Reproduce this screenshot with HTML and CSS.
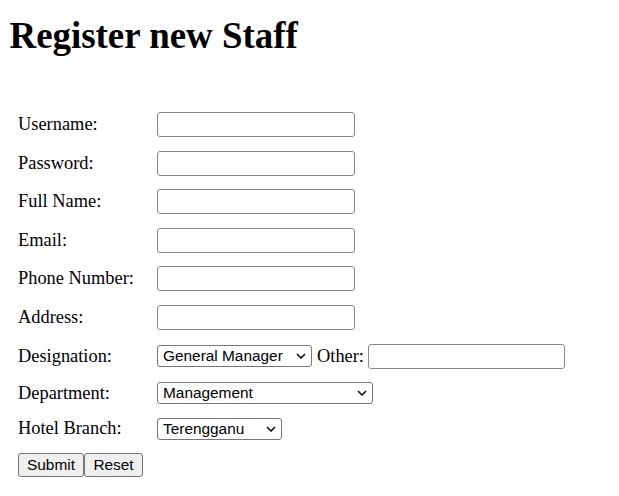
FILE: index.html
```html
<!DOCTYPE html>
<html lang="en">
<head>
<meta charset="utf-8">
<title>Register new Staff</title>
<link rel="stylesheet" href="styles.css">
</head>
<body>
<h1 class="title">Register new Staff</h1>
<form class="form">
  <label class="label">Username:</label>
  <div class="control"><input class="field" type="text"></div>

  <label class="label">Password:</label>
  <div class="control"><input class="field" type="password"></div>

  <label class="label">Full Name:</label>
  <div class="control"><input class="field" type="text"></div>

  <label class="label">Email:</label>
  <div class="control"><input class="field" type="text"></div>

  <label class="label">Phone Number:</label>
  <div class="control"><input class="field" type="text"></div>

  <label class="label">Address:</label>
  <div class="control"><input class="field" type="text"></div>

  <label class="label">Designation:</label>
  <div class="control">
    <span class="select-wrap sel-desig">
      <select class="select"><option>General Manager</option></select>
      <svg class="chev" viewBox="0 0 10 6" width="10" height="6"><path d="M1 1 L5 5 L9 1" fill="none" stroke="#111" stroke-width="1.6"/></svg>
    </span>
    <span class="other">Other:</span>
    <input class="field field-other" type="text">
  </div>

  <label class="label">Department:</label>
  <div class="control control-short">
    <span class="select-wrap sel-dept">
      <select class="select"><option>Management</option></select>
      <svg class="chev" viewBox="0 0 10 6" width="10" height="6"><path d="M1 1 L5 5 L9 1" fill="none" stroke="#111" stroke-width="1.6"/></svg>
    </span>
  </div>

  <label class="label">Hotel Branch:</label>
  <div class="control control-short">
    <span class="select-wrap sel-branch">
      <select class="select"><option>Terengganu</option></select>
      <svg class="chev" viewBox="0 0 10 6" width="10" height="6"><path d="M1 1 L5 5 L9 1" fill="none" stroke="#111" stroke-width="1.6"/></svg>
    </span>
  </div>

  <div class="actions">
    <button class="btn btn-submit" type="submit">Submit</button><button class="btn btn-reset" type="reset">Reset</button>
  </div>
</form>
</body>
</html>
```
FILE: styles.css
```css
html, body {
  margin: 0;
  padding: 0;
  background: #ffffff;
  color: #000000;
}

body {
  font-family: "Liberation Serif", "Times New Roman", serif;
  font-size: 18.4px;
}

.title {
  margin: 17px 0 0 9.5px;
  font-family: "Liberation Serif", "Times New Roman", serif;
  font-size: 36.9px;
  font-weight: bold;
  line-height: 37px;
}

.form {
  display: grid;
  grid-template-columns: 139px auto;
  grid-template-rows: repeat(7, 25px) 22px 22px 24px;
  row-gap: 13.6px;
  align-items: center;
  margin: 58px 0 0 18px;
}

.label {
  font-size: 18.4px;
  line-height: normal;
}

.control {
  display: flex;
  align-items: center;
  height: 25px;
}

.control-short {
  height: 22px;
}

.field {
  box-sizing: border-box;
  width: 198px;
  height: 25px;
  margin: 0;
  padding: 1px 3px;
  border: 1px solid #8a8a8a;
  border-radius: 3px;
  background: #ffffff;
  font-family: "Liberation Sans", Arial, sans-serif;
  font-size: 15.3px;
}

.field-other {
  width: 197px;
}

.other {
  margin: 0 4px 0 5px;
  font-size: 18.4px;
}

.select-wrap {
  position: relative;
  display: inline-block;
  height: 22px;
}

.select {
  -webkit-appearance: none;
  appearance: none;
  box-sizing: border-box;
  width: 100%;
  height: 22px;
  margin: 0;
  padding: 0 20px 0 5px;
  border: 1px solid #767676;
  border-radius: 3px;
  background: #ffffff;
  color: #000000;
  font-family: "Liberation Sans", Arial, sans-serif;
  font-size: 15.4px;
  line-height: 20px;
}

.chev {
  position: absolute;
  right: 6px;
  top: 8px;
  width: 10px;
  height: 6px;
  pointer-events: none;
}

.sel-desig {
  width: 155px;
}

.sel-dept {
  width: 216px;
}

.sel-branch {
  width: 125px;
}

.actions {
  grid-column: 1 / 3;
  display: flex;
  height: 24px;
}

.btn {
  box-sizing: border-box;
  height: 24px;
  margin: 0;
  padding: 0 8px;
  border: 1px solid #767676;
  border-radius: 3px;
  background: #efefef;
  color: #000000;
  font-family: "Liberation Sans", Arial, sans-serif;
  font-size: 15.4px;
}

.btn-submit {
  width: 66px;
}

.btn-reset {
  width: 59px;
}
```
